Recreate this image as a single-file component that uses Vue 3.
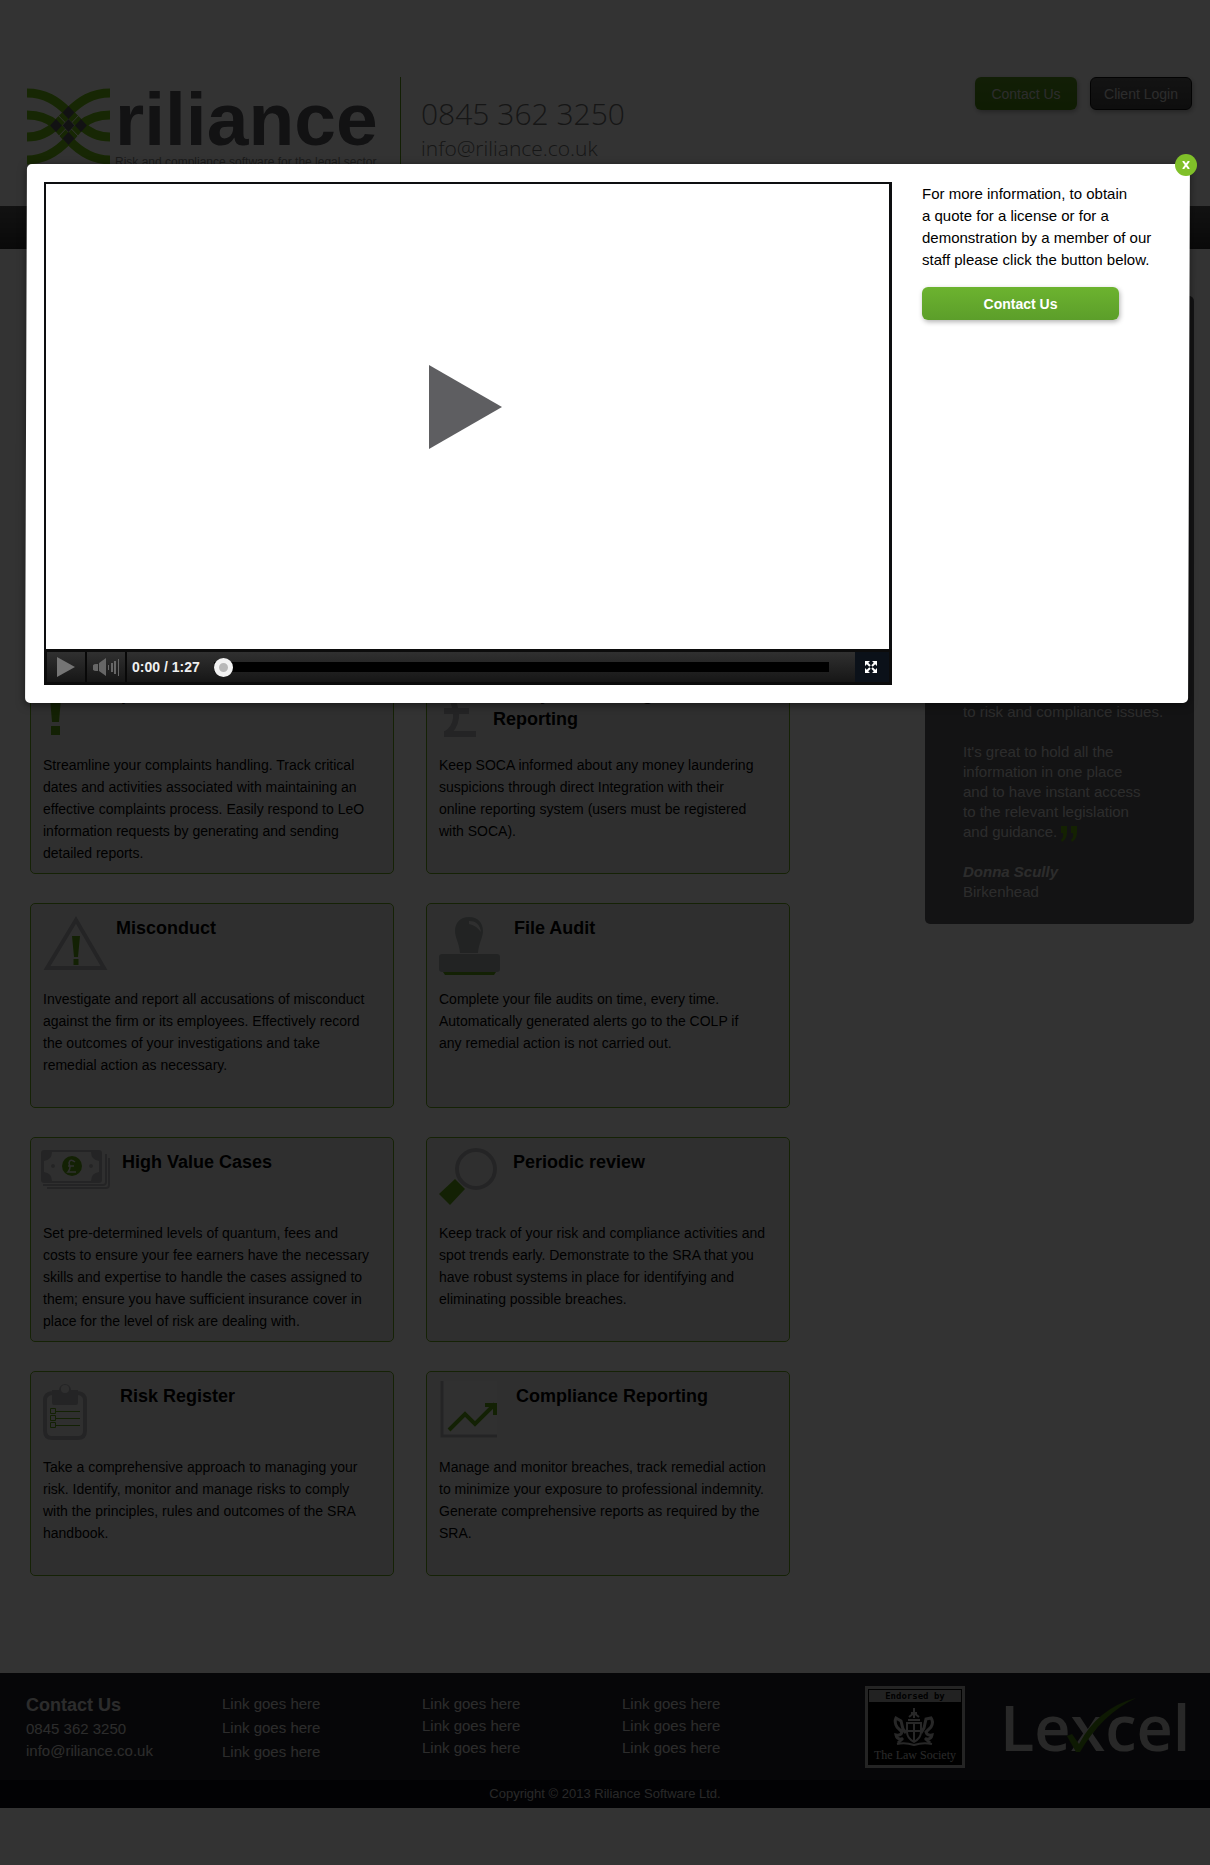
<script setup>
const cards = [
  {
    title: ['Complaints'],
    icon: 'alert',
    lines: [
      'Streamline your complaints handling. Track critical',
      'dates and activities associated with maintaining an',
      'effective complaints process. Easily respond to LeO',
      'information requests by generating and sending',
      'detailed reports.'
    ]
  },
  {
    title: ['Money Laundering', 'Reporting'],
    icon: 'pound',
    lines: [
      'Keep SOCA informed about any money laundering',
      'suspicions through direct Integration with their',
      'online reporting system (users must be registered',
      'with SOCA).'
    ]
  },
  {
    title: ['Misconduct'],
    icon: 'warning',
    lines: [
      'Investigate and report all accusations of misconduct',
      'against the firm or its employees. Effectively record',
      'the outcomes of your investigations and take',
      'remedial action as necessary.'
    ]
  },
  {
    title: ['File Audit'],
    icon: 'stamp',
    lines: [
      'Complete your file audits on time, every time.',
      'Automatically generated alerts go to the COLP if',
      'any remedial action is not carried out.'
    ]
  },
  {
    title: ['High Value Cases'],
    icon: 'money',
    lines: [
      'Set pre-determined levels of quantum, fees and',
      'costs to ensure your fee earners have the necessary',
      'skills and expertise to handle the cases assigned to',
      'them; ensure you have sufficient insurance cover in',
      'place for the level of risk are dealing with.'
    ]
  },
  {
    title: ['Periodic review'],
    icon: 'magnifier',
    lines: [
      'Keep track of your risk and compliance activities and',
      'spot trends early. Demonstrate to the SRA that you',
      'have robust systems in place for identifying and',
      'eliminating possible breaches.'
    ]
  },
  {
    title: ['Risk Register'],
    icon: 'clipboard',
    lines: [
      'Take a comprehensive approach to managing your',
      'risk. Identify, monitor and manage risks to comply',
      'with the principles, rules and outcomes of the SRA',
      'handbook.'
    ]
  },
  {
    title: ['Compliance Reporting'],
    icon: 'chart',
    lines: [
      'Manage and monitor breaches, track remedial action',
      'to minimize your exposure to professional indemnity.',
      'Generate comprehensive reports as required by the',
      'SRA.'
    ]
  }
]
const linkColumns = [3, 3, 3]
</script>

<template>
  <div class="page">
    <header class="header">
      <a class="logo" href="#">
        <svg class="logo-mark" width="83" height="78" viewBox="0 0 83 78" fill="none" aria-hidden="true">
          <g stroke="#74c414" stroke-width="9">
            <path d="M0 5C18 5 30 13 41 24L54 37C62 45 71 49 83 49" />
            <path d="M0 27C12 27 21 30 29 37L41 51C52 63 65 72 83 72" />
            <path d="M83 5C65 5 53 13 42 24L29 37C21 45 12 49 0 49" />
            <path d="M83 27C71 27 62 30 54 37L42 51C31 63 18 72 0 72" />
          </g>
          <path stroke="#fff" d="M28 24L54 51M55 24L29 51" />
          <path fill="#5a5a60" d="M41.500 18l6 6.500-6 6.500-6-6.500zM41.500 31l6 6.500-6 6.500-6-6.500zM41.500 44l6 6.500-6 6.500-6-6.500zM29 31l6 6.500-6 6.500-6-6.500zM54 31l6 6.500-6 6.500-6-6.500z" />
        </svg>
        <span class="logo-words">
          <span class="logo-name">riliance</span>
          <span class="logo-tag">Risk and compliance software for the legal sector</span>
        </span>
      </a>
      <div class="header-contact">
        <span class="phone">0845 362 3250</span>
        <a class="email" href="#">info@riliance.co.uk</a>
      </div>
      <div class="header-actions">
        <button class="btn btn-dim" type="button">Contact Us</button>
        <button class="btn btn-dark" type="button">Client Login</button>
      </div>
    </header>
    <nav class="nav" aria-label="Main"></nav>

    <main class="main">
      <section class="cards">
        <article v-for="card in cards" :key="card.icon" class="card">
          <div class="card-head">
            <svg v-if="card.icon === 'alert'" width="30" height="60" viewBox="0 0 30 60" aria-hidden="true">
              <path fill="#5fa414" d="M6 4h13l-3 36H9zM8 44h9v9H8z" />
            </svg>
            <svg v-else-if="card.icon === 'pound'" width="46" height="60" viewBox="0 0 46 60" fill="none" stroke="#b4b4b8" stroke-width="6" aria-hidden="true">
              <path d="M34 14C30 4 12 5 14 18c1 6 4 10 3 18-1 8-4 12-10 16M5 52h32M5 29h25" />
            </svg>
            <svg v-else-if="card.icon === 'warning'" width="65" height="60" viewBox="0 0 65 60" aria-hidden="true">
              <path fill="none" stroke="#b4b4b8" stroke-width="4" d="M33 4L61 52H4z" />
              <path fill="#5fa414" d="M29 20h8l-2 21h-4zM30.500 43h5v6h-5z" />
            </svg>
            <svg v-else-if="card.icon === 'stamp'" width="67" height="60" viewBox="0 0 67 60" aria-hidden="true">
              <g fill="#a8b0b0">
                <path d="M30 1c9 0 14 6 14 14 0 7-4 11-5 22H21c-1-11-5-15-5-22C16 7 21 1 30 1z" />
                <rect y="38" width="61" height="18" rx="3" />
              </g>
              <path fill="#ebebeb" d="M30 5c6 0 11 3 12 11-4-5-7-7-12-8z" />
              <path fill="#5fa414" d="M4 56h53l-2 3H6z" />
            </svg>
            <svg v-else-if="card.icon === 'money'" class="bleed" width="71" height="60" viewBox="2 0 71 60" aria-hidden="true">
              <path fill="none" stroke="#b4b4b8" stroke-width="2" d="M2 35h60q3 0 3-3V4M6 38h59q3 0 3-3V8" />
              <rect width="61" height="33" rx="3" fill="#b4b4b8" />
              <path fill="#ebebeb" d="M11 2h39q0 8 8 9v11q-8 1-8 9H11q0-8-8-9V11q8-1 8-9z" />
              <circle cx="31" cy="16" r="10" fill="#5fa414" />
              <path fill="none" stroke="#ebebeb" stroke-width="1.500" d="M34 12q-5-4-6 1l1 4q0 3-2 5h8M27 16h6" />
              <circle cx="12" cy="16" r="2" fill="#b4b4b8" />
              <circle cx="50" cy="16" r="2" fill="#b4b4b8" />
            </svg>
            <svg v-else-if="card.icon === 'magnifier'" class="bleed" width="66" height="60" viewBox="0 0 66 60" aria-hidden="true">
              <circle cx="37" cy="19" r="19" fill="none" stroke="#b4b4b8" stroke-width="4" />
              <path fill="#5fa414" d="M16 29l10 10-15 16L0 44z" />
            </svg>
            <svg v-else-if="card.icon === 'clipboard'" class="bleed" width="69" height="60" viewBox="0 0 69 60" aria-hidden="true">
              <path fill="none" stroke="#b4b4b8" stroke-width="4" d="M9 9Q2 10 2 16v31q0 7 7 7h26q7 0 7-7V16q0-6-7-7" />
              <path fill="#b4b4b8" d="M9 6h7a6 6 0 0 1 12 0h7v13q0 2-2 2H11q-2 0-2-2z" />
              <circle cx="22" cy="5" r="4" fill="#ebebeb" />
              <path fill="none" stroke="#5fa414" d="M7.500 24.500h5v5h-5zM7.500 31.500h5v5h-5zM7.500 38.500h5v5h-5zM12 27.500h25M12 34.500h25M12 41.500h25" />
            </svg>
            <svg v-else class="bleed" width="69" height="60" viewBox="0 3 69 60" fill="none" aria-hidden="true">
              <path fill="#f0f0f0" d="M4 0h54v54H4z" />
              <path stroke="#b4b4b8" stroke-width="3" d="M3 0v55h55" />
              <path stroke="#5fa414" stroke-width="4" d="M10 49l16-16 10 10 20-20M46 24h10v10" />
            </svg>
            <h2><template v-for="(line, i) in card.title" :key="i"><br v-if="i" />{{ line }}</template></h2>
          </div>
          <p><template v-for="(line, i) in card.lines" :key="i"><br v-if="i" />{{ line }}</template></p>
        </article>
      </section>

      <aside class="quote">
        <blockquote>
          <p>to risk and compliance issues.</p>
          <p>
            It's great to hold all the<br />information in one place<br />and to have instant access<br />to
            the relevant legislation<br />and guidance.
            <svg class="quote-mark" width="17" height="16" viewBox="0 0 17 16" fill="#64a80c" aria-hidden="true">
              <path d="M0 0h6v6q0 7-5 10l-1-2q3-3 2-7H0zM10 0h6v6q0 7-5 10l-1-2q3-3 2-7h-2z" />
            </svg>
          </p>
        </blockquote>
        <p class="author"><strong>Donna Scully</strong><br />Birkenhead</p>
      </aside>
    </main>

    <footer class="footer">
      <div class="footer-main">
        <div class="footer-contact">
          <h3>Contact Us</h3>
          <span>0845 362 3250</span>
          <a href="#">info@riliance.co.uk</a>
        </div>
        <ul v-for="(count, i) in linkColumns" :key="i" class="links">
          <li v-for="n in count" :key="n"><a href="#">Link goes here</a></li>
        </ul>
        <svg class="law" width="100" height="82" viewBox="0 0 100 82" role="img" aria-label="Endorsed by The Law Society">
          <rect x="1.500" y="1.500" width="97" height="79" fill="#000" stroke="#b4b4b4" stroke-width="3" />
          <rect x="4" y="4" width="92" height="12" fill="#aaa" />
          <text x="50" y="13" text-anchor="middle" font-family="'DejaVu Sans Mono', monospace" font-weight="700" font-size="9" fill="#000">Endorsed by</text>
          <g fill="none" stroke="#c4c4c4" stroke-width="2">
            <path d="M49 22v10M46 27h6M43 34h12M44 31l5-4 5 4M42 37h14v9q0 6-7 10-7-4-7-10zM49 37v18M42 45h14" />
            <path stroke-width="3" d="M38 53q-6 1-7-4 5 1 6-3l-5-5q-3-5-1-9l5 3 2 8 3 4M33 57l5-5" />
            <path stroke-width="3" d="M60 53q6 1 7-4-5 1-6-3l5-5q3-5 0-9l-5 1-2 9-3 5M65 57l-5-5" />
            <path d="M32 58q8-2 17 1 9-3 18-1" />
          </g>
          <text x="50" y="73" text-anchor="middle" font-family="'Liberation Serif', serif" font-size="12" fill="#d0d0d0">The Law Society</text>
        </svg>
        <svg class="lexcel" width="196" height="90" viewBox="0 0 196 90" role="img" aria-label="Lexcel">
          <text x="0" y="65" font-family="'Open Sans', sans-serif" font-weight="600" font-size="63" fill="#c8c8c8">Lexcel</text>
          <path fill="#47800f" d="M67 50l5-2 7 10Q98 22 136 12 102 28 80 66h-4z" />
        </svg>
      </div>
      <p class="copyright">Copyright © 2013 Riliance Software Ltd.</p>
    </footer>

    <div class="overlay"></div>

    <section class="modal" role="dialog" aria-label="Product video">
      <button class="close" type="button" aria-label="Close">
        <svg width="8" height="8" viewBox="0 0 8 8" stroke="#fff" stroke-width="2" aria-hidden="true">
          <path d="M1 0l6 8M7 0L1 8" />
        </svg>
      </button>
      <div class="video">
        <div class="screen">
          <svg width="73" height="84" viewBox="0 0 73 84" aria-hidden="true">
            <path fill="#5e5e61" d="M0 0l73 42L0 84z" />
          </svg>
        </div>
        <div class="controls">
          <button class="cell" type="button" aria-label="Play">
            <svg width="18" height="20" viewBox="0 0 18 20" aria-hidden="true"><path fill="#757575" d="M0 0l18 10L0 20z" /></svg>
          </button>
          <button class="cell" type="button" aria-label="Volume">
            <svg width="27" height="20" viewBox="0 0 27 20" fill="#666" aria-hidden="true">
              <path d="M3 7h2v7H3a3 3 0 0 1 0-7zM6 6l7-5v18l-7-5zM15 8h1v5h-1zM18 6h2v9h-2zM21 4h2v13h-2zM25 2h1v17h-1z" />
            </svg>
          </button>
          <span class="time">0:00 / 1:27</span>
          <span class="track"><span class="knob"></span></span>
          <button class="full" type="button" aria-label="Full screen">
            <svg width="12" height="12" viewBox="0 0 12 12" fill="#fff" stroke="#fff" aria-hidden="true">
              <path stroke="none" d="M0 0h5L0 5zM12 0v5L7 0zM0 12V7l5 5zM12 12H7l5-5z" />
              <path stroke-width="2" d="M1 1l4 4M11 1L7 5M1 11l4-4M11 11L7 7" />
            </svg>
          </button>
        </div>
      </div>
      <div class="pitch">
        <p>For more information, to obtain<br />a quote for a license or for a<br />demonstration by a member of our<br />staff please click the button below.</p>
        <button class="btn btn-green" type="button">Contact Us</button>
      </div>
    </section>
  </div>
</template>

<style>
body {
  margin: 0;
  background: #333;
}
</style>

<style scoped>
.page {
  position: relative;
  min-height: 100vh;
  background: #fff;
  color: #000;
  font-family: "Liberation Sans", Arial, sans-serif;
  font-size: 14px;
  line-height: 22px;
}
h2, h3, p, ul, blockquote {
  margin: 0;
  padding: 0;
}
a {
  color: inherit;
  text-decoration: none;
}
button {
  padding: 0;
  border: 0;
  font-family: inherit;
  cursor: pointer;
}
.header {
  display: flex;
  box-sizing: border-box;
  height: 206px;
  padding: 77px 18px 0 27px;
}
.logo {
  display: flex;
  gap: 5px;
  width: 373px;
  padding-top: 11px;
}
.logo-mark {
  flex: none;
}
.logo-words {
  display: flex;
  flex-direction: column;
}
.logo-name {
  color: #5a5a60;
  font-size: 75px;
  font-weight: 700;
  line-height: 62px;
}
.logo-tag {
  padding-top: 5px;
  color: #888;
  font-size: 12px;
  line-height: 14px;
  white-space: nowrap;
}
.header-contact {
  display: flex;
  flex-direction: column;
  padding: 20px 0 0 20px;
  border-left: 1px solid #5c9c10;
  color: #707070;
  font-family: "Open Sans", sans-serif;
  font-weight: 300;
}
.phone {
  font-size: 30px;
  line-height: 34px;
}
.email {
  font-size: 21px;
  line-height: 34px;
}
.header-actions {
  display: flex;
  align-items: flex-start;
  gap: 13px;
  margin-left: auto;
}
.btn {
  height: 33px;
  border-radius: 6px;
  box-shadow: 1px 2px 5px rgba(0, 0, 0, 0.3);
  font-size: 14px;
}
.btn-dim,
.btn-dark {
  width: 102px;
  color: #dcdcdc;
}
.btn-dim {
  background: linear-gradient(#5c9a20, #4a8a10);
}
.btn-dark {
  border: 1px solid #111;
  background: linear-gradient(#606060, #464646);
}
.btn-green {
  width: 197px;
  background: linear-gradient(#6cb32f, #5c9e2a);
  color: #fff;
  font-weight: 700;
}
.nav {
  height: 43px;
  background: linear-gradient(#5a5a5a, #303030);
}
.main {
  display: grid;
  grid-template-columns: minmax(0, 760px) 269px;
  justify-content: space-between;
  align-items: start;
  gap: 24px;
  padding: 47px 16px 97px 30px;
}
.cards {
  display: grid;
  grid-template-columns: 1fr 1fr;
  grid-auto-rows: minmax(205px, auto);
  gap: 29px 32px;
  margin-top: 373px;
}
.card {
  box-sizing: border-box;
  padding: 12px 12px 8px;
  border: 1px solid #6aa81c;
  border-radius: 5px;
  background: #ebebeb;
}
.card-head {
  display: flex;
  gap: 8px;
  min-height: 72px;
}
.card-head svg {
  flex: none;
}
.bleed {
  overflow: visible;
}
.card h2 {
  font-size: 18px;
  line-height: 25px;
}
.quote {
  display: flex;
  flex-direction: column;
  justify-content: flex-end;
  box-sizing: border-box;
  min-height: 628px;
  padding: 0 20px 22px 38px;
  border-radius: 5px;
  background: #5f5f64;
  color: #dcdcdc;
  font-size: 15px;
  line-height: 20px;
}
.quote p {
  margin-bottom: 20px;
}
.quote .author {
  margin-bottom: 0;
}
.author strong {
  font-style: italic;
}
.quote-mark {
  vertical-align: bottom;
}
.footer {
  background: #222228;
  color: #dcdcdc;
  font-size: 15px;
}
.footer-main {
  display: flex;
  box-sizing: border-box;
  min-height: 107px;
  padding: 13px 20px 0 26px;
}
.footer-contact {
  display: flex;
  flex-direction: column;
  width: 196px;
  padding-top: 6px;
}
.footer-contact h3 {
  font-size: 18px;
  line-height: 26px;
}
.links {
  width: 200px;
  padding-top: 7px;
  list-style: none;
}
.links li {
  line-height: 22px;
}
.footer-contact + .links li {
  padding-bottom: 2px;
}
.law {
  flex: none;
  margin-left: auto;
}
.lexcel {
  flex: none;
  margin: 0 -6px 0 35px;
}
.copyright {
  padding: 3px 0;
  background: #0a0a14;
  color: #c8c8c8;
  font-size: 13px;
  text-align: center;
}
.overlay {
  position: absolute;
  inset: 0;
  background: rgba(0, 0, 0, 0.8);
}
.modal {
  position: absolute;
  top: 164px;
  left: 26px;
  right: 21px;
  display: flex;
  gap: 30px;
  box-sizing: border-box;
  padding: 18px 0 18px 18px;
}
.modal::before {
  content: "";
  position: absolute;
  inset: 0;
  border-radius: 5px;
  background: #fff;
  box-shadow: 0 2px 8px rgba(0, 0, 0, 0.5);
  transform: skewX(-0.2deg);
}
.close {
  position: absolute;
  top: -10px;
  right: -8px;
  display: flex;
  align-items: center;
  justify-content: center;
  width: 22px;
  height: 22px;
  border-radius: 50%;
  background: #80c029;
}
.video {
  position: relative;
  flex: 1;
  display: flex;
  flex-direction: column;
}
.screen {
  display: flex;
  align-items: center;
  justify-content: center;
  box-sizing: border-box;
  min-height: 467px;
  padding: 0 4px 19px 0;
  border: solid #0d0e10;
  border-width: 2px 3px 0 2px;
}
.controls {
  display: flex;
  align-items: center;
  box-sizing: border-box;
  height: 36px;
  border: 3px solid #0c0c0c;
  background: linear-gradient(#303030, #161616);
}
.cell {
  display: flex;
  align-items: center;
  justify-content: center;
  box-sizing: border-box;
  width: 40px;
  height: 30px;
  border-right: 2px solid #080808;
  background: none;
}
.time {
  padding: 0 14px 0 5px;
  color: #f0f0f0;
  font-weight: 700;
  white-space: nowrap;
}
.track {
  flex: 1;
  display: flex;
  align-items: center;
  height: 10px;
  margin-right: 26px;
  background: #000;
}
.knob {
  box-sizing: border-box;
  width: 19px;
  height: 19px;
  border: 5px solid #f2f2f2;
  border-radius: 50%;
  background: #b8b8b8;
}
.full {
  display: flex;
  align-items: center;
  justify-content: center;
  width: 34px;
  height: 30px;
  padding-right: 3px;
  background: #0b1119;
}
.pitch {
  position: relative;
  width: 267px;
  font-size: 15px;
}
.pitch p {
  padding: 1px 0 16px;
}
</style>
